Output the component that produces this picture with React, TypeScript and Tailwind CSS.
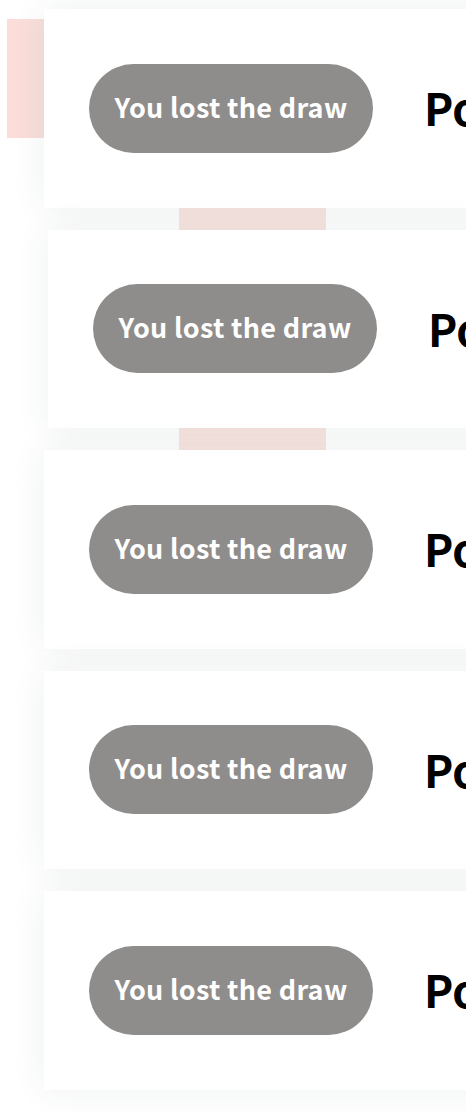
import React from "react";

function Card({ shift = false }: { shift?: boolean }) {
  return (
    <div
      className={`relative flex h-[198.5px] w-[560px] shrink-0 items-center bg-white shadow-[0_0_32px_rgba(40,70,70,0.08)] ${
        shift ? "ml-[48px]" : "ml-[44px]"
      }`}
    >
      <div className="ml-[45px] flex h-[89px] w-[284px] shrink-0 items-center justify-center rounded-full bg-[#8f8d8b] pb-[4px]">
        <span className="text-[27px] font-bold leading-none tracking-[0.3px] text-white">You lost the draw</span>
      </div>
      <span className="ml-[51px] whitespace-nowrap pb-[2px] text-[44px] font-bold leading-none text-black">Points</span>
    </div>
  );
}

export default function App() {
  return (
    <div
      className="relative h-[1114px] w-[466px] overflow-hidden bg-white"
      style={{ fontFamily: '"Noto Sans CJK JP", "Noto Sans", sans-serif' }}
    >
      <div className="absolute left-[7px] top-[19px] h-[119px] w-[60px] bg-gradient-to-r from-[#fddcd8] to-[#f3e2de]" />
      <div className="absolute left-[179px] top-[190px] h-[280px] w-[147px] bg-[#f9e6e2]" />
      <div className="relative flex flex-col gap-[22px] pt-[9px]">
        <Card />
        <Card shift />
        <Card />
        <Card />
        <Card />
      </div>
    </div>
  );
}
